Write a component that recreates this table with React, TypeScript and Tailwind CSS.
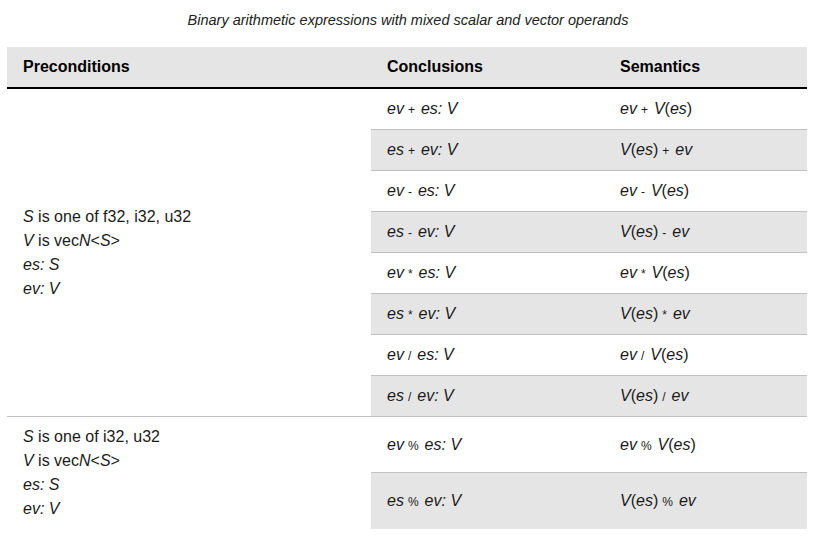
import React from "react";

type Row = { concl: React.ReactNode; sem: React.ReactNode };

const I = ({ children }: { children: React.ReactNode }) => <i className="italic">{children}</i>;
const Op = ({ children }: { children: React.ReactNode }) => (
  <span className="not-italic text-[12px] ml-[4px] mr-[6px]">{children}</span>
);

function concl(a: string, op: string, b: string) {
  return (
    <>
      <I>{a}</I>
      <Op>{op}</Op>
      <I>{b}</I>
      <I>: V</I>
    </>
  );
}

function semLeft(op: string) {
  // ev op V(es)
  return (
    <>
      <I>ev</I>
      <Op>{op}</Op>
      <I>V</I>(<I>es</I>)
    </>
  );
}

function semRight(op: string) {
  // V(es) op ev
  return (
    <>
      <I>V</I>(<I>es</I>)<Op>{op}</Op>
      <I>ev</I>
    </>
  );
}

const groupA: Row[] = [
  { concl: concl("ev", "+", "es"), sem: semLeft("+") },
  { concl: concl("es", "+", "ev"), sem: semRight("+") },
  { concl: concl("ev", "-", "es"), sem: semLeft("-") },
  { concl: concl("es", "-", "ev"), sem: semRight("-") },
  { concl: concl("ev", "*", "es"), sem: semLeft("*") },
  { concl: concl("es", "*", "ev"), sem: semRight("*") },
  { concl: concl("ev", "/", "es"), sem: semLeft("/") },
  { concl: concl("es", "/", "ev"), sem: semRight("/") },
];

const groupB: Row[] = [
  { concl: concl("ev", "%", "es"), sem: semLeft("%") },
  { concl: concl("es", "%", "ev"), sem: semRight("%") },
];

function Pre({ types }: { types: string }) {
  return (
    <div className="leading-6">
      <div>
        <I>S</I> is one of {types}
      </div>
      <div>
        <I>V</I> is vec<I>N</I>&lt;<I>S</I>&gt;
      </div>
      <div>
        <I>es: S</I>
      </div>
      <div>
        <I>ev: V</I>
      </div>
    </div>
  );
}

export default function App() {
  return (
    <div
      className="w-[816px] h-[540px] bg-white text-[#1a1a1a] overflow-hidden"
      style={{ fontFamily: '"Liberation Sans", Arial, sans-serif' }}
    >
      <div className="pt-[12px] text-center italic text-[14.5px] leading-4 text-[#222]">
        Binary arithmetic expressions with mixed scalar and vector operands
      </div>

      <div className="mt-[19px] ml-[7px] w-[800px] grid grid-cols-[364px_233px_203px] text-[16px]">
        {/* header */}
        <div className="h-[42px] bg-[#e5e5e5] border-b-2 border-black flex items-center px-4 font-bold text-black">
          Preconditions
        </div>
        <div className="h-[42px] bg-[#e5e5e5] border-b-2 border-black flex items-center px-4 font-bold text-black">
          Conclusions
        </div>
        <div className="h-[42px] bg-[#e5e5e5] border-b-2 border-black flex items-center px-4 font-bold text-black">
          Semantics
        </div>

        {/* group 1 */}
        <div className="row-span-8 border-b border-[#c0c0c0] flex items-center px-4">
          <Pre types="f32, i32, u32" />
        </div>
        {groupA.map((r, i) => (
          <React.Fragment key={i}>
            <div
              className={`h-[41px] border-b border-[#c0c0c0] flex items-center px-4 ${i % 2 ? "bg-[#e5e5e5]" : ""}`}
            >
              <span>{r.concl}</span>
            </div>
            <div
              className={`h-[41px] border-b border-[#c0c0c0] flex items-center px-4 ${i % 2 ? "bg-[#e5e5e5]" : ""}`}
            >
              <span>{r.sem}</span>
            </div>
          </React.Fragment>
        ))}

        {/* group 2 */}
        <div className="row-span-2 flex items-center px-4 py-2">
          <Pre types="i32, u32" />
        </div>
        {groupB.map((r, i) => (
          <React.Fragment key={i}>
            <div
              className={`min-h-[40px] flex items-center px-4 ${i % 2 ? "bg-[#e5e5e5]" : "border-b border-[#c0c0c0]"}`}
            >
              <span>{r.concl}</span>
            </div>
            <div
              className={`min-h-[40px] flex items-center px-4 ${i % 2 ? "bg-[#e5e5e5]" : "border-b border-[#c0c0c0]"}`}
            >
              <span>{r.sem}</span>
            </div>
          </React.Fragment>
        ))}
      </div>
    </div>
  );
}
